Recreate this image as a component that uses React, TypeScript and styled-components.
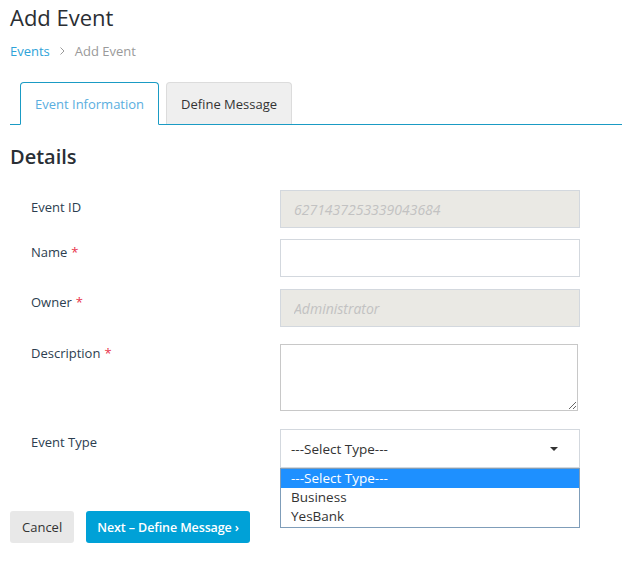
import React from "react";
import styled, { createGlobalStyle } from "styled-components";

const Global = createGlobalStyle`
  html, body { margin: 0; padding: 0; background: #fff; }
  body { font-family: "Open Sans", "Noto Sans", sans-serif; color: #2c3e50; }
  * { box-sizing: border-box; }
`;

const Page = styled.div`
  width: 622px;
  padding: 0 0 40px 10px;
`;

const Title = styled.h1`
  margin: 0;
  padding-top: 2px;
  font-size: 22px;
  font-weight: 400;
  line-height: 30px;
  color: #2a2e33;
`;

const Breadcrumb = styled.nav`
  display: flex;
  align-items: center;
  gap: 9px;
  margin-top: 10px;
  font-size: 13px;
  line-height: 18px;
`;

const Crumb = styled.a<{ $current?: boolean }>`
  color: ${(p) => (p.$current ? "#9a9a9a" : "#2ea3d9")};
  text-decoration: none;
`;

const TabBar = styled.div`
  display: flex;
  align-items: flex-end;
  margin-top: 22px;
  padding-left: 10px;
  border-bottom: 1px solid #1a9bc4;
`;

const Tab = styled.div<{ $active?: boolean }>`
  display: flex;
  align-items: center;
  height: ${(p) => (p.$active ? "43px" : "42px")};
  margin-bottom: ${(p) => (p.$active ? "-1px" : "0")};
  margin-right: 7px;
  padding: 0 ${(p) => (p.$active ? "14px" : "14px")};
  font-size: 13px;
  border-radius: 4px 4px 0 0;
  border: 1px solid ${(p) => (p.$active ? "#1a9bc4" : "#dcdcdc")};
  border-bottom: ${(p) => (p.$active ? "1px solid #fff" : "none")};
  background: ${(p) => (p.$active ? "#fff" : "#efefef")};
  color: ${(p) => (p.$active ? "#5aaee0" : "#333")};
`;

const Heading = styled.h2`
  margin: 17px 0 0;
  font-size: 20px;
  font-weight: 600;
  line-height: 30px;
  color: #2a2f35;
`;

const Form = styled.div`
  margin-top: 18px;
`;

const Row = styled.div<{ $gap: number }>`
  display: grid;
  grid-template-columns: 270px 300px;
  margin-bottom: ${(p) => p.$gap}px;
  position: relative;
`;

const Label = styled.label<{ $offset: number }>`
  padding: ${(p) => p.$offset}px 0 0 21px;
  font-size: 13px;
  line-height: 18px;
  color: #2c3e50;
`;

const Star = styled.span`
  color: #e8334a;
  margin-left: 4px;
`;

const Input = styled.input`
  width: 300px;
  height: 38px;
  padding: 0 13px;
  border: 1px solid #d3d8de;
  background: ${(p) => (p.disabled ? "#eae9e4" : "#fff")};
  font-family: inherit;
  font-size: 14px;
  font-style: italic;
  color: #c2c2c2;
  outline: none;
  &::placeholder { color: #c2c2c2; }
`;

const TextArea = styled.textarea`
  display: block;
  width: 298px;
  height: 67px;
  border: 1px solid #c8c8c8;
  font-family: inherit;
  outline: none;
`;

const SelectBox = styled.div`
  display: flex;
  align-items: center;
  justify-content: space-between;
  width: 300px;
  height: 39px;
  padding: 0 21px 0 10px;
  border: 1px solid #d3d8de;
  font-size: 13.5px;
  color: #333;
`;

const OptionList = styled.div`
  position: absolute;
  left: 270px;
  top: 39px;
  width: 300px;
  border: 1px solid #7f9db9;
  background: #fff;
  z-index: 2;
  padding-bottom: 1px;
`;

const Option = styled.div<{ $selected?: boolean }>`
  height: 19px;
  line-height: 19px;
  padding-left: 10px;
  font-size: 13.5px;
  background: ${(p) => (p.$selected ? "#1e90ff" : "#fff")};
  color: ${(p) => (p.$selected ? "#fff" : "#333")};
`;

const Actions = styled.div`
  display: flex;
  gap: 12px;
  margin-top: 43px;
`;

const Button = styled.button<{ $primary?: boolean }>`
  height: 32px;
  padding: 0 ${(p) => (p.$primary ? "11px" : "12px")};
  border: none;
  border-radius: 3px;
  font-family: inherit;
  font-size: ${(p) => (p.$primary ? "12.5px" : "13px")};
  font-weight: ${(p) => (p.$primary ? 600 : 400)};
  letter-spacing: ${(p) => (p.$primary ? "-0.1px" : "0")};
  background: ${(p) => (p.$primary ? "#00a1d7" : "#e8e8e8")};
  color: ${(p) => (p.$primary ? "#fff" : "#333")};
`;

const Chevron = () => (
  <svg width="7" height="10" viewBox="0 0 7 10">
    <polyline points="1.5,1.5 5,5 1.5,8.5" fill="none" stroke="#9a9a9a" strokeWidth="1" />
  </svg>
);

const Caret = () => (
  <svg width="8" height="4" viewBox="0 0 8 4">
    <polygon points="0,0 8,0 4,4" fill="#333" />
  </svg>
);

export default function App() {
  return (
    <>
      <Global />
      <Page>
        <Title>Add Event</Title>
        <Breadcrumb>
          <Crumb href="#">Events</Crumb>
          <Chevron />
          <Crumb $current>Add Event</Crumb>
        </Breadcrumb>
        <TabBar>
          <Tab $active>Event Information</Tab>
          <Tab>Define Message</Tab>
        </TabBar>
        <Heading>Details</Heading>
        <Form>
          <Row $gap={11}>
            <Label $offset={8}>Event ID</Label>
            <Input disabled value="6271437253339043684" readOnly />
          </Row>
          <Row $gap={12}>
            <Label $offset={4}>
              Name<Star>*</Star>
            </Label>
            <Input />
          </Row>
          <Row $gap={17}>
            <Label $offset={4}>
              Owner<Star>*</Star>
            </Label>
            <Input disabled placeholder="Administrator" />
          </Row>
          <Row $gap={18}>
            <Label $offset={0}>
              Description<Star>*</Star>
            </Label>
            <TextArea />
          </Row>
          <Row $gap={0}>
            <Label $offset={4}>Event Type</Label>
            <SelectBox>
              <span>---Select Type---</span>
              <Caret />
            </SelectBox>
            <OptionList>
              <Option $selected>---Select Type---</Option>
              <Option>Business</Option>
              <Option>YesBank</Option>
            </OptionList>
          </Row>
        </Form>
        <Actions>
          <Button>Cancel</Button>
          <Button $primary>Next – Define Message ›</Button>
        </Actions>
      </Page>
    </>
  );
}
